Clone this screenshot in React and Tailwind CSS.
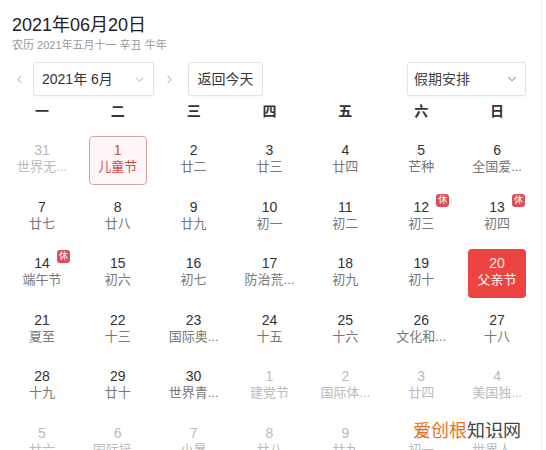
import React from "react";
import { ChevronLeft, ChevronRight, ChevronDown } from "lucide-react";

const rows = [
  [["31", "世界无...", "out"], ["1", "儿童节", "fest"], ["2", "廿二"], ["3", "廿三"], ["4", "廿四"], ["5", "芒种"], ["6", "全国爱..."]],
  [["7", "廿七"], ["8", "廿八"], ["9", "廿九"], ["10", "初一"], ["11", "初二"], ["12", "初三", "rest"], ["13", "初四", "rest"]],
  [["14", "端午节", "rest"], ["15", "初六"], ["16", "初七"], ["17", "防治荒..."], ["18", "初九"], ["19", "初十"], ["20", "父亲节", "sel"]],
  [["21", "夏至"], ["22", "十三"], ["23", "国际奥..."], ["24", "十五"], ["25", "十六"], ["26", "文化和..."], ["27", "十八"]],
  [["28", "十九"], ["29", "廿十"], ["30", "世界青..."], ["1", "建党节", "out"], ["2", "国际体...", "out"], ["3", "廿四", "out"], ["4", "美国独...", "out"]],
  [["5", "廿六", "out"], ["6", "国际接...", "out"], ["7", "小暑", "out"], ["8", "廿八", "out"], ["9", "廿九", "out"], ["10", "初一", "out"], ["11", "世界人...", "out"]],
];

const week = ["一", "二", "三", "四", "五", "六", "日"];

function Cell({ d }) {
  const [num, lunar, kind] = d;
  let box = "relative w-[58px] h-[49px] mx-auto flex flex-col items-center pt-[6px] rounded-[4px]";
  let numCls = "text-[14px] leading-[16px] text-[#333]";
  let lunCls = "text-[13px] leading-[18px] text-[#777]";
  if (kind === "out") {
    numCls = "text-[14px] leading-[16px] text-[#bbb]";
    lunCls = "text-[13px] leading-[18px] text-[#bbb]";
  } else if (kind === "fest") {
    box += " border border-[#d9a3a3] bg-[#fff7f7]";
    numCls = "text-[14px] leading-[16px] text-[#c05050] -mt-[1px]";
    lunCls = "text-[13px] leading-[18px] text-[#d84545]";
  } else if (kind === "sel") {
    box += " bg-[#ee4343]";
    numCls = "text-[14px] leading-[16px] text-[#ffe9e9]";
    lunCls = "text-[13px] leading-[18px] text-white";
  }
  return (
    <div className="h-[56.5px]">
      <div className={box}>
        <div className={numCls}>{num}</div>
        <div className={lunCls}>{lunar}</div>
        {kind === "rest" && (
          <div className="absolute left-[44px] top-[1px] w-[13px] h-[13px] rounded-[3px] bg-[#d9505c] text-white text-[9px] leading-[13px] text-center">
            休
          </div>
        )}
      </div>
    </div>
  );
}

export default function App() {
  return (
    <div
      className="relative w-[546px] h-[450px] overflow-hidden bg-white"
      style={{ fontFamily: '"Liberation Sans", "Noto Sans CJK SC", sans-serif' }}
    >
      <div className="w-[542px] h-[450px] border-r border-[#eeeeee]">
        <div className="pl-[12px] pt-[13px]">
          <div className="text-[18px] leading-[24px] text-[#222]">2021年06月20日</div>
          <div className="text-[11px] leading-[16px] text-[#999]">农历 2021年五月十一 辛丑 牛年</div>
        </div>
        <div className="flex items-center mt-[9px] pl-[13px] pr-[15px] h-[34px]">
          <ChevronLeft size={13} strokeWidth={1.5} className="text-[#888]" />
          <div className="ml-[7px] w-[121px] h-[34px] border border-[#e3e3e3] rounded-[3px] flex items-center justify-between pl-[8px] pr-[7px] shadow-[0_1px_2px_rgba(0,0,0,0.04)]">
            <span className="text-[14px] text-[#333]">2021年 6月</span>
            <ChevronDown size={13} strokeWidth={1.5} className="text-[#999]" />
          </div>
          <ChevronRight size={13} strokeWidth={1.5} className="text-[#888] ml-[9px]" />
          <div className="ml-[12px] w-[75px] h-[34px] border border-[#e3e3e3] rounded-[3px] flex items-center justify-center text-[14px] text-[#333] shadow-[0_1px_2px_rgba(0,0,0,0.04)]">
            返回今天
          </div>
          <div className="ml-auto w-[119px] h-[34px] border border-[#e3e3e3] rounded-[3px] flex items-center justify-between pl-[6px] pr-[6px] shadow-[0_1px_2px_rgba(0,0,0,0.04)]">
            <span className="text-[14px] text-[#444]">假期安排</span>
            <ChevronDown size={14} strokeWidth={1.5} className="text-[#666]" />
          </div>
        </div>
        <div className="grid grid-cols-7 w-[531px] ml-[4px] mt-[4px] h-[22px]">
          {week.map((w) => (
            <div key={w} className="text-center text-[14px] leading-[22px] font-bold text-[#333]">
              {w}
            </div>
          ))}
        </div>
        <div className="grid grid-cols-7 w-[531px] ml-[4px] mt-[14px]">
          {rows.flat().map((d, i) => (
            <Cell key={i} d={d} />
          ))}
        </div>
      </div>
      <div className="absolute left-[413px] top-[420px] text-[18px] leading-[22px] whitespace-nowrap">
        <span className="text-[#e8731f]">爱创根</span>
        <span className="text-[#444]">知识网</span>
      </div>
    </div>
  );
}
